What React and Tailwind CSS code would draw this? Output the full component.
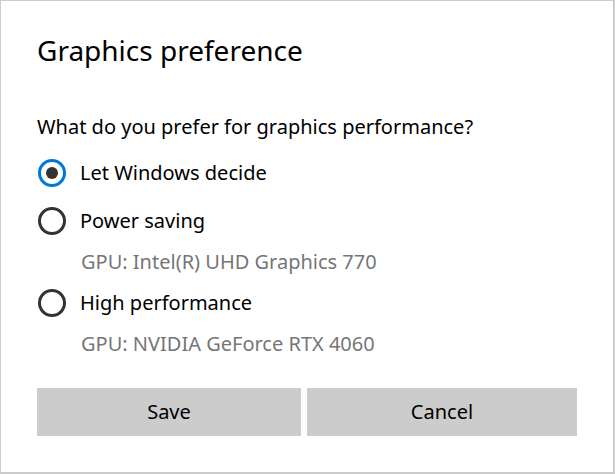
import React, { useState } from 'react';

const options = [
  { id: 'auto', label: 'Let Windows decide' },
  { id: 'power', label: 'Power saving', gpu: 'GPU: Intel(R) UHD Graphics 770' },
  { id: 'high', label: 'High performance', gpu: 'GPU: NVIDIA GeForce RTX 4060' },
];

const Radio = ({ checked }) => (
  <span
    className={`ml-px w-7 h-7 rounded-full border-[3px] flex items-center justify-center shrink-0 ${
      checked ? 'border-[#0078d7]' : 'border-[#333333]'
    }`}
  >
    {checked && <span className="w-3 h-3 rounded-full bg-[#333333]" />}
  </span>
);

export default function App() {
  const [choice, setChoice] = useState('auto');

  return (
    <div
      className="w-[615px] h-[474px] bg-white border border-[#cccccc] border-r-2 border-b-2 pl-9 pt-8 flex flex-col text-black"
      style={{ fontFamily: '"Noto Sans", "Open Sans", sans-serif' }}
    >
      <h1 className="text-[28px] leading-[34px] font-normal">Graphics preference</h1>

      <p className="mt-[47px] text-[20px] leading-[26px]">What do you prefer for graphics performance?</p>

      <div className="mt-[9px] flex flex-col">
        {options.map((o) => (
          <div key={o.id}>
            <button
              onClick={() => setChoice(o.id)}
              className="h-12 flex items-center text-left"
            >
              <Radio checked={choice === o.id} />
              <span className="ml-[14px] text-[20px]">{o.label}</span>
            </button>
            {o.gpu && (
              <div className="h-[34px] flex items-center pl-[44px] text-[20px] text-[#767676]">{o.gpu}</div>
            )}
          </div>
        ))}
      </div>

      <div className="mt-[27px] flex gap-1.5">
        <button className="w-[264px] h-12 bg-[#cccccc] text-[20px]">Save</button>
        <button className="w-[270px] h-12 bg-[#cccccc] text-[20px]">Cancel</button>
      </div>
    </div>
  );
}
